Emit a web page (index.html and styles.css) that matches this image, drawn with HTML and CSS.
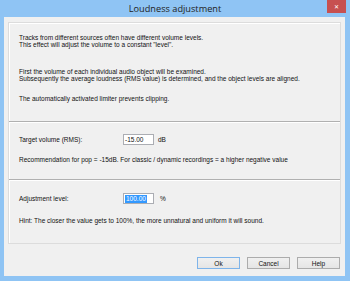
FILE: index.html
```html
<!DOCTYPE html>
<html>
<head>
<meta charset="utf-8">
<link rel="stylesheet" href="styles.css">
</head>
<body>
<div class="window">
  <div class="titlebar">
    <span class="title">Loudness adjustment</span>
    <div class="close">&#x2715;</div>
  </div>
  <div class="client">
    <div class="panel">
      <section class="intro">
        <p class="p1">Tracks from different sources often have different volume levels.<br>This effect will adjust the volume to a constant "level".</p>
        <p class="p2">First the volume of each individual audio object will be examined.<br>Subsequently the average loudness (RMS value) is determined, and the object levels are aligned.</p>
        <p class="p3">The automatically activated limiter prevents clipping.</p>
      </section>
      <section class="target">
        <div class="row">
          <span class="label">Target volume (RMS):</span>
          <span class="input">-15.00</span>
          <span class="unit">dB</span>
        </div>
        <p class="note">Recommendation for pop = -15dB. For classic / dynamic recordings = a higher negative value</p>
      </section>
      <section class="adjust">
        <div class="row">
          <span class="label">Adjustment level:</span>
          <span class="input"><span class="sel">100.00</span></span>
          <span class="unit pct">%</span>
        </div>
        <p class="note">Hint: The closer the value gets to 100%, the more unnatural and uniform it will sound.</p>
      </section>
    </div>
    <div class="buttons">
      <div class="btn default">Ok</div>
      <div class="btn">Cancel</div>
      <div class="btn">Help</div>
    </div>
  </div>
</div>
</body>
</html>
```
FILE: styles.css
```css
html, body {
  margin: 0;
  padding: 0;
}
body {
  width: 350px;
  height: 281px;
  overflow: hidden;
  font-family: "Liberation Sans", Arial, sans-serif;
}
.window {
  width: 350px;
  height: 281px;
  background: #8fc4f4;
  display: flex;
  flex-direction: column;
}
.titlebar {
  height: 17px;
  position: relative;
  display: flex;
  align-items: center;
  justify-content: center;
}
.title {
  font-family: "Open Sans", "Noto Sans", sans-serif;
  font-size: 9.2px;
  color: #222;
  margin-top: -1px;
}
.close {
  position: absolute;
  right: 4px;
  top: 0;
  width: 19px;
  height: 13px;
  background: #c75050;
  color: #fff;
  font-size: 6px;
  font-weight: bold;
  display: flex;
  align-items: center;
  justify-content: center;
  font-family: "DejaVu Sans", sans-serif;
}
.client {
  margin: 0 5px 5px 4px;
  flex: 1;
  background: #f0f0f0;
  display: flex;
  flex-direction: column;
  padding: 5px 4px 0 4px;
  font-size: 6.5px;
  color: #111;
}
.panel {
  height: 222px;
  box-sizing: border-box;
  border: 1px solid #dcdcdc;
  box-shadow: inset 1px 1px 0 #fff;
  display: flex;
  flex-direction: column;
}
.panel p {
  margin: 0;
  line-height: 7px;
  white-space: nowrap;
}
section {
  padding-left: 10px;
  box-sizing: border-box;
}
.intro {
  height: 98px;
  padding-top: 11px;
}
.p2 { margin-top: 20px !important; }
.p3 { margin-top: 13px !important; }
.target {
  height: 58px;
  border-top: 1px solid #b0b0b0;
  box-shadow: inset 0 1px 0 #fff;
  padding-top: 12px;
}
.adjust {
  flex: 1;
  border-top: 1px solid #b0b0b0;
  box-shadow: inset 0 1px 0 #fff;
  padding-top: 13px;
}
.row {
  display: flex;
  align-items: center;
  height: 11px;
}
.label {
  width: 104px;
}
.input {
  width: 31px;
  height: 11px;
  box-sizing: border-box;
  background: #fff;
  border: 1px solid #abadb3;
  display: flex;
  align-items: center;
  padding-left: 1px;
}
.sel {
  background: #3399ff;
  color: #fff;
  line-height: 8px;
  padding: 0 1px;
}
.unit {
  margin-left: 4px;
}
.pct {
  margin-left: 6px;
}
.target .note {
  margin-top: 11px;
}
.adjust .note {
  margin-top: 13px;
}
.buttons {
  display: flex;
  justify-content: flex-end;
  gap: 7px;
  margin-top: 13px;
  padding-right: 1px;
}
.btn {
  width: 43px;
  height: 12px;
  box-sizing: border-box;
  border: 1px solid #acacac;
  background: linear-gradient(#f0f0f0, #e5e5e5);
  display: flex;
  align-items: center;
  justify-content: center;
  font-size: 6.5px;
}
.btn.default {
  border-color: #7eb4ea;
}
```
